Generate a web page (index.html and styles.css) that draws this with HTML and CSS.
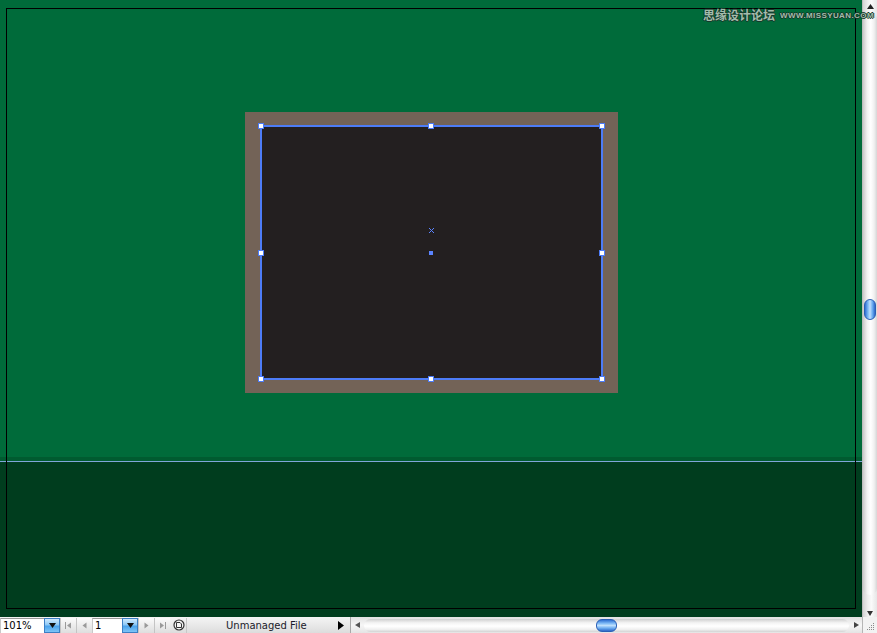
FILE: index.html
```html
<!DOCTYPE html>
<html lang="en">
<head>
<meta charset="utf-8">
<title>Artboard</title>
<link rel="stylesheet" href="styles.css">
</head>
<body>
<div class="window">
  <div class="main">
    <div class="canvas">
      <div class="artboard">
        <div class="frame">
          <div class="art">
            <div class="sel"></div>
            <span class="h h1"></span><span class="h h2"></span><span class="h h3"></span>
            <span class="h h4"></span><span class="h h5"></span>
            <span class="h h6"></span><span class="h h7"></span><span class="h h8"></span>
            <svg class="xmark" width="5" height="5" viewBox="0 0 5 5" shape-rendering="crispEdges" fill="#5b84ff"><rect x="0" y="0" width="1" height="1"/><rect x="1" y="1" width="1" height="1"/><rect x="2" y="2" width="1" height="1"/><rect x="3" y="3" width="1" height="1"/><rect x="4" y="4" width="1" height="1"/><rect x="4" y="0" width="1" height="1"/><rect x="3" y="1" width="1" height="1"/><rect x="1" y="3" width="1" height="1"/><rect x="0" y="4" width="1" height="1"/></svg>
            <span class="cpoint"></span>
          </div>
        </div>
      </div>
    </div>
    <div class="vscroll">
      <div class="vbtn-up"><svg width="7" height="5" viewBox="0 0 7 5"><path d="M3.5 0L7 5H0Z" fill="#222"/></svg></div>
      <div class="vtrack"><div class="vthumb"></div></div>
      <div class="vbtn-down"><svg width="6" height="5" viewBox="0 0 6 5"><path d="M0 0H6L3 5Z" fill="#333"/></svg></div>
    </div>
  </div>
  <div class="status">
    <div class="field zoomfield">101%</div>
    <div class="aqua-btn"><svg width="7" height="5" viewBox="0 0 7 5"><path d="M0 0H7L3.5 5Z" fill="#111"/></svg></div>
    <div class="nav-btn"><svg width="7" height="7" viewBox="0 0 7 7"><path d="M0.5 0V7" stroke="#9a9a9a"/><path d="M6 0.5V6.5L2 3.5Z" fill="#9a9a9a"/></svg></div>
    <div class="nav-btn"><svg width="5" height="7" viewBox="0 0 5 7"><path d="M4.5 0.5V6.5L0.5 3.5Z" fill="#9a9a9a"/></svg></div>
    <div class="field pagefield">1</div>
    <div class="aqua-btn"><svg width="7" height="5" viewBox="0 0 7 5"><path d="M0 0H7L3.5 5Z" fill="#111"/></svg></div>
    <div class="nav-btn"><svg width="5" height="7" viewBox="0 0 5 7"><path d="M0.5 0.5V6.5L4.5 3.5Z" fill="#9a9a9a"/></svg></div>
    <div class="nav-btn"><svg width="7" height="7" viewBox="0 0 7 7"><path d="M1 0.5V6.5L5 3.5Z" fill="#9a9a9a"/><path d="M6.5 0V7" stroke="#9a9a9a"/></svg></div>
    <div class="status-icon"><svg width="12" height="12" viewBox="0 0 12 12"><circle cx="6" cy="6" r="5" fill="#f4f4f4" stroke="#333" stroke-width="1.2"/><path d="M3.5 3.5H7L8.5 5V8.5H3.5Z" fill="none" stroke="#333" stroke-width="1"/></svg></div>
    <div class="status-info"><span class="status-text">Unmanaged File</span><svg width="6" height="9" viewBox="0 0 6 9"><path d="M0 0L6 4.5L0 9Z" fill="#000"/></svg></div>
    <div class="hscroll">
      <div class="harrow"><svg width="5" height="6" viewBox="0 0 5 6"><path d="M5 0V6L0 3Z" fill="#555"/></svg></div>
      <div class="htrack"><div class="hthumb"></div></div>
      <div class="harrow"><svg width="5" height="6" viewBox="0 0 5 6"><path d="M0 0V6L5 3Z" fill="#444"/></svg></div>
    </div>
    <div class="grip"><svg width="10" height="10" viewBox="0 0 10 10" fill="#8a8a8a"><rect x="8" y="2" width="1" height="1"/><rect x="6" y="4" width="1" height="1"/><rect x="8" y="4" width="1" height="1"/><rect x="4" y="6" width="1" height="1"/><rect x="6" y="6" width="1" height="1"/><rect x="8" y="6" width="1" height="1"/><rect x="2" y="8" width="1" height="1"/><rect x="4" y="8" width="1" height="1"/><rect x="6" y="8" width="1" height="1"/><rect x="8" y="8" width="1" height="1"/></svg></div>
  </div>
  <div class="watermark"><span class="wm-cn">思缘设计论坛</span><span class="wm-en">WWW.MISSYUAN.COM</span></div>
</div>
</body>
</html>
```

FILE: styles.css
```css
* { box-sizing: border-box; margin: 0; padding: 0; }
html, body { width: 877px; height: 633px; overflow: hidden; background: #fff; }
body { font-family: "Liberation Sans", Arial, sans-serif; }

.window { position: relative; width: 877px; height: 633px; display: flex; flex-direction: column; }
.main { display: flex; height: 617px; }

.canvas {
  width: 862px; height: 617px;
  padding: 8px 6px 8px 6px;
  background: linear-gradient(to bottom,
    #006b3a 0, #006b3a 457px,
    #005b30 457px, #005b30 461px,
    #7fa6d8 461px, #7fa6d8 462px,
    #003d1e 462px, #003d1e 100%);
}
.artboard {
  height: 100%;
  border: 1px solid #000;
  display: flex; align-items: flex-start;
  padding: 103px 0 0 238px;
}
.frame {
  background: #736357;
  padding: 14px 15px 13px 16px;
}
.art {
  position: relative;
  width: 342px; height: 254px;
  background: #231f20;
}
.sel {
  position: absolute; left: -1px; top: -1px;
  width: 343px; height: 255px;
  border: 2px solid #4d7cf7;
}
.h {
  position: absolute; width: 6px; height: 6px;
  background: #fff; border: 1px solid #4d7cf7;
}
.h1 { left: -3px; top: -3px; }
.h2 { left: 167px; top: -3px; }
.h3 { left: 338px; top: -3px; }
.h4 { left: -3px; top: 124px; }
.h5 { left: 338px; top: 124px; }
.h6 { left: -3px; top: 250px; }
.h7 { left: 167px; top: 250px; }
.h8 { left: 338px; top: 250px; }
.xmark { position: absolute; left: 168px; top: 102px; display: block; }
.cpoint { position: absolute; left: 168px; top: 125px; width: 4px; height: 4px; background: #5b84ff; }

/* vertical scrollbar */
.vscroll {
  width: 15px; height: 617px;
  display: flex; flex-direction: column;
  background: linear-gradient(to right, #d4d4d4 0, #efefef 35%, #fafafa 60%, #e6e6e6 100%);
  border-left: 1px solid #bdbdbd;
}
.vbtn-up { height: 12px; display: flex; justify-content: center; padding-top: 4px; }
.vbtn-up svg { display: block; }
.vtrack {
  flex: 1;
  border-radius: 7px;
  background: linear-gradient(to right, #c9c9c9 0, #f2f2f2 30%, #ffffff 55%, #f0f0f0 80%, #d6d6d6 100%);
}
.vthumb {
  width: 12px; height: 21px; margin: 287px auto 0;
  border-radius: 6px;
  border: 1px solid #2a5fb6;
  background: linear-gradient(to right, #2f6fd2 0, #7db9f6 30%, #bfe0fd 50%, #6aaaf0 75%, #2d68c8 100%);
}
.vbtn-down { height: 22px; display: flex; justify-content: center; align-items: flex-end; padding-bottom: 1px; }
.vbtn-down svg { display: block; }

/* status bar */
.status {
  height: 16px; display: flex; align-items: stretch;
  background: linear-gradient(to bottom, #f4f4f4 0, #e9e9e9 50%, #dcdcdc 100%);
  font-size: 11px; color: #000;
}
.field {
  background: #fff;
  border-top: 1px solid #9a9a9a;
  border-left: 1px solid #c8c8c8;
  margin-top: 1px;
  padding: 0 0 0 2px;
  line-height: 14px;
  font-family: "DejaVu Sans", sans-serif; font-size: 10px;
}
.zoomfield { width: 44px; }
.pagefield { width: 30px; }
.aqua-btn {
  width: 16px; margin-top: 1px;
  display: flex; justify-content: center; align-items: center;
  border: 1px solid #3c7fc4;
  background: linear-gradient(to bottom, #cfe9fd 0, #8cc8f6 45%, #4aa3ec 55%, #7ec4f7 100%);
}
.aqua-btn svg, .nav-btn svg, .harrow svg, .status-icon svg, .status-info svg, .grip svg { display: block; }
.nav-btn {
  width: 16px; margin-top: 1px;
  display: flex; justify-content: center; align-items: center;
  border-left: 1px solid #c4c4c4;
  background: linear-gradient(to bottom, #fbfbfb 0, #ececec 50%, #dedede 100%);
}
.status-icon { width: 16px; display: flex; justify-content: center; align-items: center; padding-left: 2px; }
.status-info {
  width: 164px; display: flex; align-items: center; justify-content: space-between;
  padding: 0 6px 0 39px;
  border-left: 1px solid #c8c8c8;
  margin-top: 1px;
  font-family: "DejaVu Sans", sans-serif; font-size: 10px;
}
.status-text { color: #1a1a2a; }

.hscroll {
  width: 512px; display: flex; align-items: stretch;
  border-left: 1px solid #a8a8a8;
  background: linear-gradient(to bottom, #e2e2e2 0, #f6f6f6 50%, #e4e4e4 100%);
}
.harrow { width: 12px; display: flex; justify-content: center; align-items: center; }
.htrack {
  flex: 1; margin: 2px 1px 1px 1px;
  border-radius: 7px;
  background: linear-gradient(to bottom, #cfcfcf 0, #f4f4f4 30%, #ffffff 55%, #f0f0f0 80%, #d3d3d3 100%);
  display: flex; align-items: center;
}
.hthumb {
  width: 21px; height: 13px; margin-left: 232px;
  border-radius: 6px;
  border: 1px solid #2a5fb6;
  background: linear-gradient(to bottom, #2f6fd2 0, #7db9f6 30%, #bfe0fd 50%, #6aaaf0 75%, #2d68c8 100%);
}
.grip {
  width: 15px; display: flex; align-items: flex-end; justify-content: flex-end;
  padding: 0 2px 2px 0;
  border-left: 1px solid #b5b5b5;
  background: #f2f2f2;
}

/* watermark */
.watermark {
  position: absolute; left: 703px; top: 6px;
  display: flex; align-items: center; gap: 5px;
  white-space: nowrap;
  color: #a3bcab;
  text-shadow: 1px 0 0 #16382a, -1px 0 0 #16382a, 0 1px 0 #16382a, 0 -1px 0 #16382a;
}
.wm-cn { font-family: "Noto Sans CJK SC", sans-serif; font-weight: 700; font-size: 12px; }
.wm-en { font-family: "Liberation Sans", sans-serif; font-weight: 700; font-size: 8px; letter-spacing: 0.4px; padding-top: 2px; }
```
